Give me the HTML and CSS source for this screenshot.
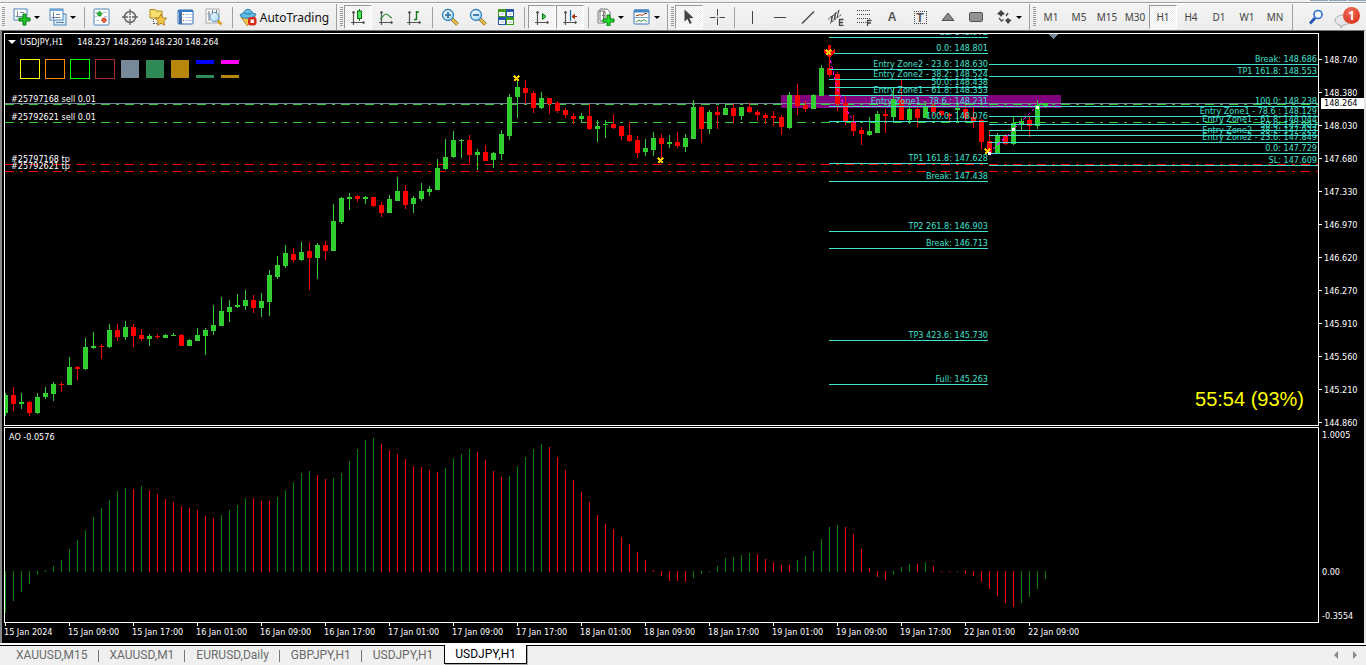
FILE: index.html
```html
<!DOCTYPE html>
<html lang="en">
<head>
<meta charset="utf-8">
<title>USDJPY,H1</title>
<link rel="stylesheet" href="styles.css">
</head>
<body>
<svg class="defs" aria-hidden="true">
  <defs>
    <g id="axes" fill="none" stroke="#555" stroke-width="1.2"><path d="M4.500 3v14M2 14.500h13"/><path d="M3 5l1.500-2L6 5zM14 13l2 1.500-2 1.500z" fill="#555" stroke-width=".5"/></g>
    <linearGradient id="lens" x1="0" y1="0" x2="1" y2="1"><stop offset="0" stop-color="#fff"/><stop offset="1" stop-color="#9fd4f5"/></linearGradient>
  </defs>
</svg>
<div class="strip"><i></i><i></i><i></i></div>
<header class="toolbar">
  <span class="grip first"></span>
  <button class="tool drop" aria-label="New chart"><svg class="ico" viewBox="0 0 18 18"><rect x="1" y="1" width="13" height="11" fill="#fff" stroke="#4c86bd"/><path d="M4.500 3v7M2.500 8.500h9M7 4.500h4" stroke="#7890a0" fill="none"/><path d="M10 6h3v4h4v3h-4v4h-3v-4H6v-3h4z" fill="#1ec32a" stroke="#0b7a17"/></svg><i class="caret"></i></button>
  <button class="tool drop" aria-label="Profiles"><svg class="ico" viewBox="0 0 18 18"><rect x="5" y="6" width="12" height="11" fill="#dcecf8" stroke="#4c86bd"/><rect x="1" y="1" width="13" height="11" fill="#fff" stroke="#4c86bd"/><path d="M1 2h13" stroke="#6ea6d8" stroke-width="2"/><path d="M4.500 4v7M2.500 9.500h9M7 6.500h4M7 14.500h8" stroke="#67809a" fill="none"/></svg><i class="caret"></i></button>
  <span class="sep"></span>
  <button class="tool" aria-label="Market watch"><svg class="ico" viewBox="0 0 18 18"><rect x="1" y="1" width="15" height="16" rx="1" fill="#fff" stroke="#4c86bd"/><path d="M2 4.500h2M10 4.500h4M2 8.500h2M11 8.500h3M3 12.500h3" stroke="#a8c5df"/><path d="M6.500 3l3 3H8v2H5V6H3.500z" fill="#29b533" stroke="#0b7a17" stroke-width=".6"/><path d="M11 15l-3-3h1.500v-2h3v2H14z" fill="#ee6840" stroke="#b42c0c" stroke-width=".6"/></svg></button>
  <button class="tool" aria-label="Data window"><svg class="ico" viewBox="0 0 18 18" fill="none" stroke="#666"><circle cx="9" cy="9" r="5.500" stroke-width="1.500"/><path d="M9 1v6M9 11v6M1 9h6M11 9h6M8 9h2" stroke-width="1.300"/></svg></button>
  <button class="tool" aria-label="Navigator"><svg class="ico" viewBox="0 0 18 18"><path d="M1 1.500h5l1 1.500h6v7H1z" fill="#f8de70" stroke="#b28a1c"/><path d="M4.500 11v6M5 15.500h4" stroke="#555" stroke-dasharray="1 1"/><path d="M12 6l1.800 3.800 4 .5-3 2.800.8 4.200-3.600-2-3.600 2 .8-4.200-3-2.800 4-.5z" fill="#f5c542" stroke="#9f7417" stroke-width=".8"/></svg></button>
  <button class="tool" aria-label="Terminal"><svg class="ico" viewBox="0 0 18 18"><rect x="1" y="2" width="15" height="14" rx="1" fill="#fff" stroke="#2d6eb5"/><path d="M1 3h15" stroke="#3479c5" stroke-width="2"/><path d="M2 4h3v12H2z" fill="#3a6da5"/><path d="M6 6.500h1M8 6.500h7M6 9.500h1M8 9.500h7M6 12.500h1M8 12.500h7" stroke="#b2c8df"/><path d="M6 6.500h1M6 12.500h1" stroke="#d33"/></svg></button>
  <button class="tool" aria-label="Strategy tester"><svg class="ico" viewBox="0 0 18 18"><rect x="1" y="1" width="13" height="14" fill="#fafafa" stroke="#aaa"/><path d="M4 3v10M7.500 2v5M11.500 2v6M2.500 6H4M10 5h2" stroke="#777"/><path d="M12.500 12.500l4 4" stroke="#d6a21b" stroke-width="2.600"/><circle cx="9.500" cy="9" r="4.500" fill="url(#lens)" fill-opacity=".9" stroke="#4b91c9"/></svg></button>
  <span class="sep"></span>
  <button class="tool auto"><svg class="ico" viewBox="0 0 18 18"><path d="M2 9l14-1-1 5-7 4.500z" fill="#f5ca4b" stroke="#b1851c"/><path d="M1 7c1-1.500 3-1 4-3 1-3.500 7-3.500 8 0 1 2 3 1.500 4 2-1 5-15 6-16 1z" fill="#65bce2" stroke="#287fae"/><path d="M5 5c3 1.500 5 1.500 8 0" fill="none" stroke="#287fae"/><rect x="9" y="9" width="8.500" height="8.500" rx="3" fill="#d7281a"/><rect x="11.500" y="11.500" width="3.500" height="3.500" fill="#fff"/></svg><span>AutoTrading</span></button>
  <span class="sep full"></span>
  <span class="grip"></span>
  <button class="tool on" aria-label="Candlesticks"><svg class="ico" viewBox="0 0 18 18"><use href="#axes"/><path d="M10.500 1v12" stroke="#087413"/><rect x="8.500" y="3" width="4" height="7.500" fill="#4fe05c" stroke="#087413"/></svg></button>
  <button class="tool" aria-label="Line chart"><svg class="ico" viewBox="0 0 18 18"><use href="#axes"/><path d="M3 11c3-1 3-5 6-5s3 3 6 4" fill="none" stroke="#2c9437" stroke-width="1.200"/></svg></button>
  <button class="tool" aria-label="Bar chart"><svg class="ico" viewBox="0 0 18 18"><use href="#axes"/><path d="M11.500 3v9M9 11.500h2.500M11.500 4H14" stroke="#107b1d" stroke-width="1.400" fill="none"/></svg></button>
  <span class="sep"></span>
  <button class="tool" aria-label="Zoom in"><svg class="ico" viewBox="0 0 18 18"><path d="M11 11l5.500 5.500" stroke="#8e6b1c" stroke-width="3.500"/><path d="M11 11l5.500 5.500" stroke="#efc54b" stroke-width="2"/><circle cx="7" cy="7" r="5.500" fill="url(#lens)" stroke="#2f80bd" stroke-width="1.300"/><path d="M7 4v6M4 7h6" stroke="#326d9c" stroke-width="1.700"/></svg></button>
  <button class="tool" aria-label="Zoom out"><svg class="ico" viewBox="0 0 18 18"><path d="M11 11l5.500 5.500" stroke="#8e6b1c" stroke-width="3.500"/><path d="M11 11l5.500 5.500" stroke="#efc54b" stroke-width="2"/><circle cx="7" cy="7" r="5.500" fill="url(#lens)" stroke="#2f80bd" stroke-width="1.300"/><path d="M4 7h6" stroke="#326d9c" stroke-width="1.700"/></svg></button>
  <button class="tool" aria-label="Tile windows"><svg class="ico" viewBox="0 0 18 18"><path d="M1 1h8v8H1zM9 9h8v8H9z" fill="#3d9c1c"/><path d="M9 1h8v8H9zM1 9h8v8H1z" fill="#2459ae"/><path d="M2 4h6v4H2zM10 4h6v4h-6zM2 12h6v4H2zM10 12h6v4h-6z" fill="#fff"/><path d="M3 6h4M11 6h4M3 14h4M11 14h4" stroke="#a8c0df"/></svg></button>
  <span class="sep"></span>
  <button class="tool on" aria-label="Auto scroll"><svg class="ico" viewBox="0 0 18 18"><use href="#axes"/><path d="M9.500 5.500l3.500 3-3.500 3z" fill="#3cd14a" stroke="#087413"/></svg></button>
  <button class="tool on" aria-label="Chart shift"><svg class="ico" viewBox="0 0 18 18"><use href="#axes"/><path d="M9.500 2v11" stroke="#2472ac" stroke-width="1.300"/><path d="M16 8.500h-5M13.500 6.500l-2.500 2 2.500 2z" fill="#b63f16" stroke="#a33109"/></svg></button>
  <span class="sep"></span>
  <button class="tool drop" aria-label="Indicators"><svg class="ico" viewBox="0 0 18 18"><path d="M1 3h7v12H1zM3 1h7l3 3v9H3z" fill="#fff" stroke="#777"/><path d="M8 4H6.500v7M5 7.500h3" fill="none" stroke="#777"/><path d="M10 7h3v4h4v3h-4v4h-3v-4H6v-3h4z" fill="#25dc2c" stroke="#078011"/></svg><i class="caret"></i></button>
  <button class="tool drop" aria-label="Templates"><svg class="ico" viewBox="0 0 18 18"><rect x="1" y="2" width="15" height="14" rx="1" fill="#fff" stroke="#3977b4"/><path d="M1 3h15" stroke="#4686c6" stroke-width="3"/><path d="M1 9.500h15" stroke="#77a4cf"/><path d="M3 7.500h2l2-1 2 1 3-2h2" fill="none" stroke="#a23c18"/><path d="M3 14l3-2 2 1.500 3-2 3 2.500" fill="none" stroke="#32903b"/></svg><i class="caret"></i></button>
  <span class="sep narrow full"></span>
  <span class="grip"></span>
  <button class="tool on" aria-label="Cursor"><svg class="ico" viewBox="0 0 18 18"><path d="M4.500 1.500v12l3-2.500 2.200 5 2-.9-2.200-4.800 4-.4z" fill="#444"/></svg></button>
  <button class="tool" aria-label="Crosshair"><svg class="ico" viewBox="0 0 18 18"><path d="M9.500 1v6.500M9.500 10.500V17M2 9.500h5.500M11.500 9.500H17M9 9.500h1" stroke="#444"/></svg></button>
  <span class="sep narrow"></span>
  <button class="tool" aria-label="Vertical line"><svg class="ico" viewBox="0 0 18 18"><path d="M9.500 3v13" stroke="#444"/></svg></button>
  <button class="tool" aria-label="Horizontal line"><svg class="ico" viewBox="0 0 18 18"><path d="M3 9.500h12" stroke="#444"/></svg></button>
  <button class="tool" aria-label="Trendline"><svg class="ico" viewBox="0 0 18 18"><path d="M3 15.500L15 3.500" stroke="#444" stroke-width="1.200"/></svg></button>
  <button class="tool" aria-label="Equidistant channel"><svg class="ico" viewBox="0 0 18 18" fill="none" stroke="#444"><path d="M1 11.500L13 2M3 15.500L15 6" stroke-dasharray="2 1"/><path d="M4 14l2-7M7 12l2-8M10 10l2-8M4 8l1 6M8 5v6"/><path d="M16.500 11.500h-4v6h4M12.500 14.500H16" stroke-width="1.300"/></svg></button>
  <button class="tool" aria-label="Fibonacci"><svg class="ico" viewBox="0 0 18 18" fill="none" stroke="#444"><path d="M2 2.500h14M2 6.500h14M2 10.500h14M2 14.500h9" stroke-dasharray="1 1"/><path d="M16.500 12.500h-4V18M12.500 15H16" stroke-width="1.300"/></svg></button>
  <button class="tool letter" aria-label="Text">A</button>
  <button class="tool letter" aria-label="Text label"><span class="textbox">T</span></button>
  <button class="tool" aria-label="Triangle"><svg class="ico" viewBox="0 0 18 18"><path d="M9 5l6 7.500H3z" fill="#888" stroke="#555"/></svg></button>
  <button class="tool" aria-label="Rectangle"><svg class="ico" viewBox="0 0 18 18"><rect x="2.500" y="4.500" width="13" height="9" rx="1" fill="#929292" stroke="#555"/></svg></button>
  <button class="tool drop" aria-label="Arrows"><svg class="ico" viewBox="0 0 18 18"><path d="M6 2l4 4-2.500 1L6 9 4.500 7 2 6zM13 16l-3-4 2-1 1-1.500 1 1.500 2.500 1z" fill="#444"/><path d="M4 10l2.500 3 2-1.500M11 8l2-3" fill="none" stroke="#555" stroke-width="1.500"/></svg><i class="caret"></i></button>
  <span class="sep narrow full"></span>
  <span class="grip"></span>
  <button class="tool tf">M1</button><button class="tool tf">M5</button><button class="tool tf">M15</button><button class="tool tf">M30</button><button class="tool tf on">H1</button><button class="tool tf">H4</button><button class="tool tf">D1</button><button class="tool tf">W1</button><button class="tool tf">MN</button>
  <span class="sep narrow full"></span>
  <span class="grow"></span>
  <button class="tool" aria-label="Search"><svg class="ico" viewBox="0 0 18 18"><path d="M3 15.500L8 10" stroke="#2458b8" stroke-width="2.800"/><circle cx="11" cy="6.500" r="4" fill="#f5f9ff" stroke="#2e6dd1" stroke-width="1.600"/></svg></button>
  <button class="tool chat" aria-label="Messages, 1 new"><svg class="bubble" viewBox="0 0 20 18"><path d="M10 4c5 0 7 3 7 5s-2 5-7 5l-2 3-1-3c-4-1-5-3-5-5s3-5 8-5z" fill="#e6e6ea" stroke="#aaa"/></svg><span class="badge">1</span></button>
</header>

<main class="chart">
  <section class="plot price-plot">
    <svg class="canvas" id="price" role="img" aria-label="USDJPY hourly candlesticks"></svg>
    <div class="overlay">
      <div class="title"><i class="tri"></i><span>USDJPY,H1</span><span class="ohlc">148.237 148.269 148.230 148.264</span></div>
      <div class="swatches">
        <i class="box yellow"></i><i class="box orange"></i><i class="box lime"></i><i class="box brown"></i>
        <i class="fill slate"></i><i class="fill sea"></i><i class="fill gold"></i>
        <i class="pair blue"></i><i class="pair pink"></i>
      </div>
    </div>
    <div class="timer">55:54 (93%)</div>
  </section>
  <aside class="axis price-axis">
    <span>148.740</span><span>148.380</span><span>148.030</span><span>147.680</span><span>147.330</span><span>146.970</span><span>146.620</span><span>146.270</span><span>145.910</span><span>145.560</span><span>145.210</span><span>144.860</span>
    <b class="last">148.264</b>
  </aside>
  <section class="plot">
    <svg class="canvas" id="ao" role="img" aria-label="Awesome oscillator"></svg>
    <div class="ao-title">AO -0.0576</div>
  </section>
  <aside class="axis ao-axis"><span>1.0005</span><span class="zero">0.00</span><span>-0.3554</span></aside>
  <footer class="times">
    <span>15 Jan 2024</span><span>15 Jan 09:00</span><span>15 Jan 17:00</span><span>16 Jan 01:00</span><span>16 Jan 09:00</span><span>16 Jan 17:00</span><span>17 Jan 01:00</span><span>17 Jan 09:00</span><span>17 Jan 17:00</span><span>18 Jan 01:00</span><span>18 Jan 09:00</span><span>18 Jan 17:00</span><span>19 Jan 01:00</span><span>19 Jan 09:00</span><span>19 Jan 17:00</span><span>22 Jan 01:00</span><span>22 Jan 09:00</span>
  </footer>
</main>

<nav class="tabs">
  <button>XAUUSD,M15</button><button>XAUUSD,M1</button><button>EURUSD,Daily</button><button>GBPJPY,H1</button><button>USDJPY,H1</button><button class="current">USDJPY,H1</button>
  <span class="grow"></span>
  <button class="scroll" aria-label="Previous tabs"><svg viewBox="0 0 6 8"><path d="M5 0v8L1 4z" fill="#888"/></svg></button>
  <button class="scroll" aria-label="Next tabs"><svg viewBox="0 0 6 8"><path d="M1 0v8l4-4z" fill="#888"/></svg></button>
</nav>
<script src="chart.js"></script>
</body>
</html>
```
FILE: styles.css
```css
* { box-sizing: border-box; }
body { margin: 0; height: 100vh; display: flex; flex-direction: column; background: #f0f0f0; font-family: "Noto Sans", sans-serif; font-size: 12px; color: #222; overflow: hidden; }
button { border: 0; background: none; padding: 0; margin: 0; font: inherit; color: inherit; }
i { font-style: normal; }
.defs { position: absolute; width: 0; height: 0; }
.grow { flex: 1; }

.strip { height: 3px; flex: none; border-bottom: 1px solid #a0a0a0; display: flex; justify-content: flex-end; gap: 1px; }
.strip i { width: 18px; height: 1px; background: #8fa3b8; }
.toolbar { height: 27px; flex: none; display: flex; align-items: center; border-top: 1px solid #fff; background: linear-gradient(#f4f4f4, #ececec); }
.tool { width: 28px; height: 24px; flex: none; display: flex; align-items: center; justify-content: center; }
.tool.on { border: 1px solid #999; border-right-color: #fff; border-bottom-color: #fff; background: repeating-conic-gradient(#fff 0 25%, #ececec 0 50%) 0 0 / 2px 2px; }
.ico { width: 18px; height: 18px; flex: none; }
.drop { width: 36px; gap: 3px; }
.caret { border: 3px solid transparent; border-top-color: #000; border-bottom: 0; }
.auto { width: 96px; gap: 3px; color: #111; }
.sep { width: 8px; height: 21px; flex: none; background: linear-gradient(#a0a0a0, #a0a0a0) center / 1px 100% no-repeat; }
.sep.narrow { width: 7px; }
.sep.full { height: 100%; }
.grip { width: 4px; height: 20px; flex: none; background: repeating-linear-gradient(#9a9a9a 0 1px, transparent 1px 2px) left / 3px 100% no-repeat; }
.grip.first { width: 8px; background-position: 2px 0; }
.letter { font-weight: 700; font-size: 12px; color: #555; font-family: "Liberation Sans", sans-serif; }
.textbox { width: 13px; height: 13px; line-height: 12px; border: 1px dotted #444; }
.tf { font-size: 10px; color: #444; }
.chat { position: relative; width: 36px; }
.bubble { width: 20px; height: 18px; margin: 6px 10px 0 0; flex: none; }
.badge { position: absolute; top: 2px; right: 6px; width: 17px; height: 17px; border-radius: 50%; background: radial-gradient(circle at 40% 25%, #f36d58, #d42814); color: #fff; font-weight: 700; font-size: 12px; line-height: 17px; text-align: center; }

.chart { flex: 1; min-height: 0; display: grid; grid-template-columns: minmax(0, 1fr) 45px; grid-template-rows: minmax(0, 1fr) 196px 20px; background: #000; color: #fff; border-top: 1px solid #777; border-left: 2px solid #888; border-right: 2px solid #e4e4e4; padding: 2px 0 0 2px; font: 9px/12px "DejaVu Sans Condensed", "DejaVu Sans", sans-serif; }
.plot { position: relative; border: 1px solid #fff; min-height: 0; overflow: hidden; }
.price-plot { margin-bottom: 1px; }
.canvas { display: block; width: 100%; height: 100%; }
.overlay { position: absolute; top: 2px; left: 3px; }
.title { display: flex; align-items: center; line-height: 12px; gap: 4px; }
.ohlc { margin-left: 10px; }
.tri { border: 4px solid transparent; border-top-color: #fff; border-bottom: 0; }
.swatches { display: flex; align-items: center; gap: 5px; margin: 11px 0 0 12px; }
.swatches i { width: 20px; height: 20px; }
.box { border: 1px solid; }
.yellow { color: #ff0; } .orange { color: #ff8c00; } .lime { color: #0f0; } .brown { color: #a52a2a; }
.fill, .pair { border: 1px solid #000; }
.slate { background: #778899; } .sea { background: #2e8b57; } .gold { background: #b8860b; }
.blue { background: linear-gradient(#00f 0 4px, #000 4px 15px, #2e8b57 15px) padding-box; }
.pink { background: linear-gradient(#f0f 0 4px, #000 4px 15px, #b8860b 15px) padding-box; }
.timer { position: absolute; right: 14px; bottom: 14px; font: 20px/24px "Liberation Sans", sans-serif; color: #ff0; }
.ao-title { position: absolute; top: 3px; left: 4px; }
.axis { display: flex; flex-direction: column; }
.price-axis { position: relative; padding-top: 10px; height: 100%; min-height: 0; }
.price-axis span { height: 33px; flex: none; display: flex; align-items: center; }
.axis span::before { content: ""; width: 3px; height: 1px; background: #fff; margin-right: 2px; }
.last { position: absolute; top: 65px; left: 2px; right: 0; padding-left: 3px; background: #fff; color: #000; font-weight: 400; line-height: 11px; }
.ao-axis { justify-content: space-between; padding: 2px 0 1px 3px; }
.ao-axis span::before { display: none; }
.ao-axis .zero { margin-top: 92px; }
.times { grid-column: 1 / -1; display: flex; overflow: hidden; }
.times span { width: 64px; flex: none; white-space: nowrap; padding-top: 3px; background: linear-gradient(#fff, #fff) 1px 0 / 1px 3px no-repeat; }

.tabs { height: 22px; flex: none; display: flex; align-items: stretch; padding: 0 2px 0 5px; font-family: Roboto, sans-serif; font-size: 12px; color: #6b6b6b; border-top: 2px solid #fff; background: linear-gradient(#000, #000) 0 0 / 100% 1px no-repeat #f0f0f0; }
.tabs button { padding: 0 11px; line-height: 18px; background: linear-gradient(#777, #777) right 5px / 1px 12px no-repeat; }
.tabs button:nth-child(5) { background: none; }
.tabs .current { border: 1px solid #000; border-top: 0; background: #fff; color: #000; padding: 0 10px; margin-bottom: 1px; box-shadow: 1px 1px 0 #aaa; }
.tabs .scroll { padding: 0; width: 19px; background: none; }
.scroll svg { width: 6px; height: 8px; }
```
FILE: chart.js
```js
// Candles: colour (g/r), high, body top, body bottom, low; one every 8px.
const candles = `g393,395,413,416 r387,395,404,411 g393,402,404,409 r401,402,413,416 g393,397,413,414 g387,393,397,399 g382,384,394,401 r382,384,385,392
g357,367,385,385 r366,367,369,380 g338,347,369,370 g332,346,348,349 r344,346,347,359 g324,330,347,348 r324,330,337,341 g321,327,337,340
r324,327,336,347 r329,335,339,341 g334,336,339,346 r334,336,337,339 g334,335,338,338 g333,335,336,336 r334,335,346,346 g339,340,346,346
g328,335,341,341 g328,330,336,355 g305,325,331,335 g297,311,326,326 g300,307,312,322 g294,305,307,308 g290,300,306,310 r295,300,308,313
g293,301,308,317 g270,275,302,316 g256,265,277,279 g245,253,266,268 r248,254,260,262 g242,252,260,261 r242,251,258,290 g243,245,258,279
r241,245,251,260 g204,221,251,251 g197,198,222,224 g193,197,199,210 r195,196,199,202 g196,197,199,204 r197,197,206,207 r202,205,213,217
g195,199,213,213 g177,191,201,201 r185,191,205,209 g196,198,204,213 g183,191,199,201 g186,189,192,196 g159,168,190,190 g139,157,169,170
g131,140,157,158 g139,140,141,158 r135,140,155,163 g149,152,155,170 r145,152,161,161 g152,153,160,168 g130,134,154,160 g94,97,136,140
g79,87,97,118 r80,88,93,104 r91,93,108,113 g92,98,108,109 r98,98,104,114 r101,103,111,113 r108,110,115,118 r113,116,119,124
g113,116,119,123 r104,116,129,130 g120,126,129,142 g120,124,125,138 r114,124,128,129 r126,126,136,140 r122,135,141,142 r136,140,153,158
g139,148,152,156 g132,138,150,156 r134,138,144,160 g135,142,144,148 r132,142,146,148 g134,138,147,152 g100,107,139,139 r106,107,129,143
g110,112,129,134 r106,112,115,129 g105,108,115,115 r104,108,116,123 g107,107,116,120 r103,107,112,113 r110,112,115,121 r113,115,118,124
r111,116,118,126 r115,117,127,135 g92,95,128,129 r84,95,106,115 r101,105,109,112 g94,95,109,109 g65,68,96,96 r54,68,75,77
r72,74,104,111 r96,103,121,125 r115,121,131,136 r127,130,134,145 g117,131,135,136 g111,114,133,133 r109,114,116,133 g87,99,117,122
r80,100,120,120 g106,109,120,124 r107,109,118,127 g102,106,118,118 r103,105,112,116 r110,111,115,116 r113,114,116,121 g102,108,110,121
r105,109,118,121 r107,117,121,128 r119,120,142,150 r131,141,153,155 g133,135,153,153 r134,135,144,145 g117,123,144,145 g118,121,124,130
r117,120,126,137 g100,105,126,129 g103,103,106,108`.split(/\s+/);

// Oscillator levels, zero at 571.
const osc = [613,601,592,584,575,570,566,560,549,540,530,517,508,500,491,488,489,486,490,494,499,502,506,508,510,516,518,515,510,505,498,498,501,501,497,490,482,473,471,475,479,478,473,461,449,440,438,444,450,454,459,466,467,470,472,468,458,454,449,452,460,471,477,476,466,457,449,444,447,457,470,480,492,502,515,524,529,537,544,552,560,570,576,581,581,582,578,574,572,566,558,557,555,553,554,559,562,565,565,560,556,551,539,527,525,527,534,549,568,577,580,575,567,564,564,562,566,572,572,571,574,576,582,589,596,603,607,603,597,589,579];

const fibLeft = [[37,'SL: 148.972'],[53,'0.0: 148.801'],[69,'Entry Zone2 - 23.6: 148.630'],[79,'Entry Zone2 - 38.2: 148.524'],[87,'50.0: 148.438'],[95,'Entry Zone1 - 61.8: 148.353'],[106,'Entry Zone1 - 78.6 : 148.231'],[121,'100.0: 148.076'],[163,'TP1 161.8: 147.628'],[181,'Break: 147.438'],[231,'TP2 261.8: 146.903'],[248,'Break: 146.713'],[340,'TP3 423.6: 145.730'],[384,'Full: 145.263']];
const fibRight = [[64,'Break: 148.686'],[76,'TP1 161.8: 148.553'],[106,'100.0: 148.238'],[116,'Entry Zone1 - 78.6 : 148.129'],[124,'Entry Zone1 - 61.8: 148.044'],[130,'50.0: 147.983'],[135,'Entry Zone2 - 38.2: 147.923'],[142,'Entry Zone2 - 23.6: 147.849'],[153,'0.0: 147.729'],[165,'SL: 147.609']];

const rect = (x, y, w, h, fill) => `<rect x="${x}" y="${y}" width="${w}" height="${h}" fill="${fill}"/>`;
const label = (x, y, text, cls, anchor = 'end') => `<text x="${x}" y="${y}" class="${cls}" text-anchor="${anchor}" fill="${cls === 'order' ? '#fff' : '#40e0d0'}">${text}</text>`;
const cross = (x, y) => `<path d="M${x - 2} ${y - 2}l5 5m0-5l-5 5" stroke="#fc0" stroke-width="1.500" fill="none"/>`;

function draw() {
  const price = document.getElementById('price');
  const right = 5 + price.clientWidth;
  const dashed = (y, c) => `<path d="M5 ${y}.5H${right}" stroke="${c}" stroke-dasharray="9 6 3 6"/>`;
  let s = '<g transform="translate(-5 -34)" shape-rendering="crispEdges">';
  s += rect(781, 95, 280, 13, '#800080');
  s += rect(5, 103, right - 5, 1, '#778899');
  s += dashed(104, '#32cd32') + dashed(122, '#32cd32') + dashed(164, '#f00') + dashed(171, '#f00');
  candles.forEach((c, i) => {
    const [hi, top, bot, lo] = c.slice(1).split(',').map(Number);
    const x = 5 + 8 * i, fill = c[0] === 'g' ? '#32cd32' : '#f00';
    s += rect(x, hi, 1, lo - hi, fill) + rect(x - 2, top, 5, bot - top, fill);
  });
  fibLeft.forEach(([y, t]) => { s += rect(829, y, 159, 1, '#40e0d0') + label(988, y - 2, t, 'fib'); });
  fibRight.forEach(([y, t]) => { s += rect(989, y, right - 989, 1, '#40e0d0') + label(right - 1, y - 2, t, 'fib'); });
  s += '<path d="M829 54L837 88L845 108L856 124M989 153L1013 130L1037 106" fill="none" stroke="#f0f" stroke-dasharray="3 3"/>';
  s += '<path d="M828 45h3v6h2l1-2h1v3l-5 6h-1l-5-6v-3h1l1 2h2z" fill="#f00"/>';
  s += cross(516, 78) + cross(660, 160) + cross(828, 52) + cross(987, 151);
  s += rect(988, 152, 3, 3, '#fff') + rect(1012, 128, 3, 3, '#fff') + rect(1036, 106, 3, 3, '#fff');
  s += '<path d="M1048 34h10l-5 5z" fill="#778899"/>';
  [['#25797168 sell 0.01', 102], ['#25792621 sell 0.01', 120], ['#25797168 tp', 162], ['#25792621 tp', 169]].forEach(([t, y]) => { s += label(11, y, t, 'order', 'start'); });
  price.innerHTML = s + '</g>';

  let a = '<g transform="translate(-5 -428)" shape-rendering="crispEdges">';
  osc.forEach((v, i) => {
    const down = i > 0 && v >= osc[i - 1];
    const fill = down ? '#f00' : '#008000';
    a += v >= 572 ? rect(5 + 8 * i, 571, 1, v - 571, fill) : rect(5 + 8 * i, v, 1, 572 - v, fill);
  });
  document.getElementById('ao').innerHTML = a + '</g>';
}
draw();
window.addEventListener('resize', draw);
```
